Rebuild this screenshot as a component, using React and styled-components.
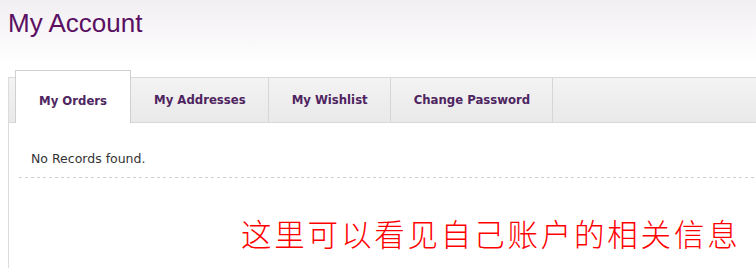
import styled, { createGlobalStyle } from "styled-components";

const GlobalStyle = createGlobalStyle`
  html, body {
    margin: 0;
    padding: 0;
  }

  body {
    overflow: hidden;
    background: linear-gradient(#f2eff2 0, #f8f6f8 30px, #fff 62px) no-repeat;
    font-family: "DejaVu Sans", Verdana, sans-serif;
  }
`;

const tabs = ["My Orders", "My Addresses", "My Wishlist", "Change Password"];

const App = () => {
  return (
    <>
      <GlobalStyle />
      <Page>
        <Title>My Account</Title>
        <Panel>
          <TabBar>
            {tabs.map((name, i) => (
              <Tab key={name} $active={i === 0}>
                {name}
              </Tab>
            ))}
          </TabBar>
          <Content>
            <Row>No Records found.</Row>
            <Divider />
            <Note>这里可以看见自己账户的相关信息</Note>
          </Content>
        </Panel>
      </Page>
    </>
  );
};

export default App;

const Page = styled.div`
  padding-left: 8px;
`;

const Title = styled.h1`
  margin: 10px 0 0;
  font-family: "Liberation Sans", Arial, sans-serif;
  font-size: 26px;
  font-weight: 400;
  line-height: 26px;
  color: #5a0f62;
`;

const Panel = styled.div`
  margin-top: 41px;
  border-left: 1px solid #dcdcdc;
  min-height: 200px;
`;

const TabBar = styled.ul`
  display: flex;
  margin: 0;
  padding: 0 0 0 6px;
  list-style: none;
  height: 44px;
  border-top: 1px solid #d9d9d9;
  border-bottom: 1px solid #d9d9d9;
  background: linear-gradient(#f3f3f3, #e9e9e9);
`;

const Tab = styled.li`
  display: flex;
  align-items: center;
  padding: 0 22px 0 23px;
  border-right: 1px solid #d6d6d6;
  font-size: 11.7px;
  font-weight: 700;
  color: #4e2560;
  white-space: nowrap;
  cursor: pointer;

  ${({ $active }) =>
    $active &&
    `
    position: relative;
    margin-top: -8px;
    margin-bottom: -1px;
    padding: 7px 23px 0;
    background: #fff;
    border: 1px solid #d0d0d0;
    border-bottom: none;
  `}
`;

const Content = styled.div`
  padding-left: 10px;
`;

const Row = styled.div`
  padding: 28px 12px 10px;
  font-size: 12.5px;
  line-height: 16px;
  color: #333;
`;

const Divider = styled.div`
  height: 1px;
  background: repeating-linear-gradient(
    to right,
    #cfcfcf 0 3px,
    transparent 3px 6px
  );
`;

const Note = styled.p`
  margin: 40px 0 0;
  padding-left: 222px;
  font-family: "Noto Sans CJK SC", sans-serif;
  font-size: 30.5px;
  font-weight: 300;
  line-height: 30px;
  letter-spacing: 2.8px;
  color: #f00;
  white-space: nowrap;
`;
